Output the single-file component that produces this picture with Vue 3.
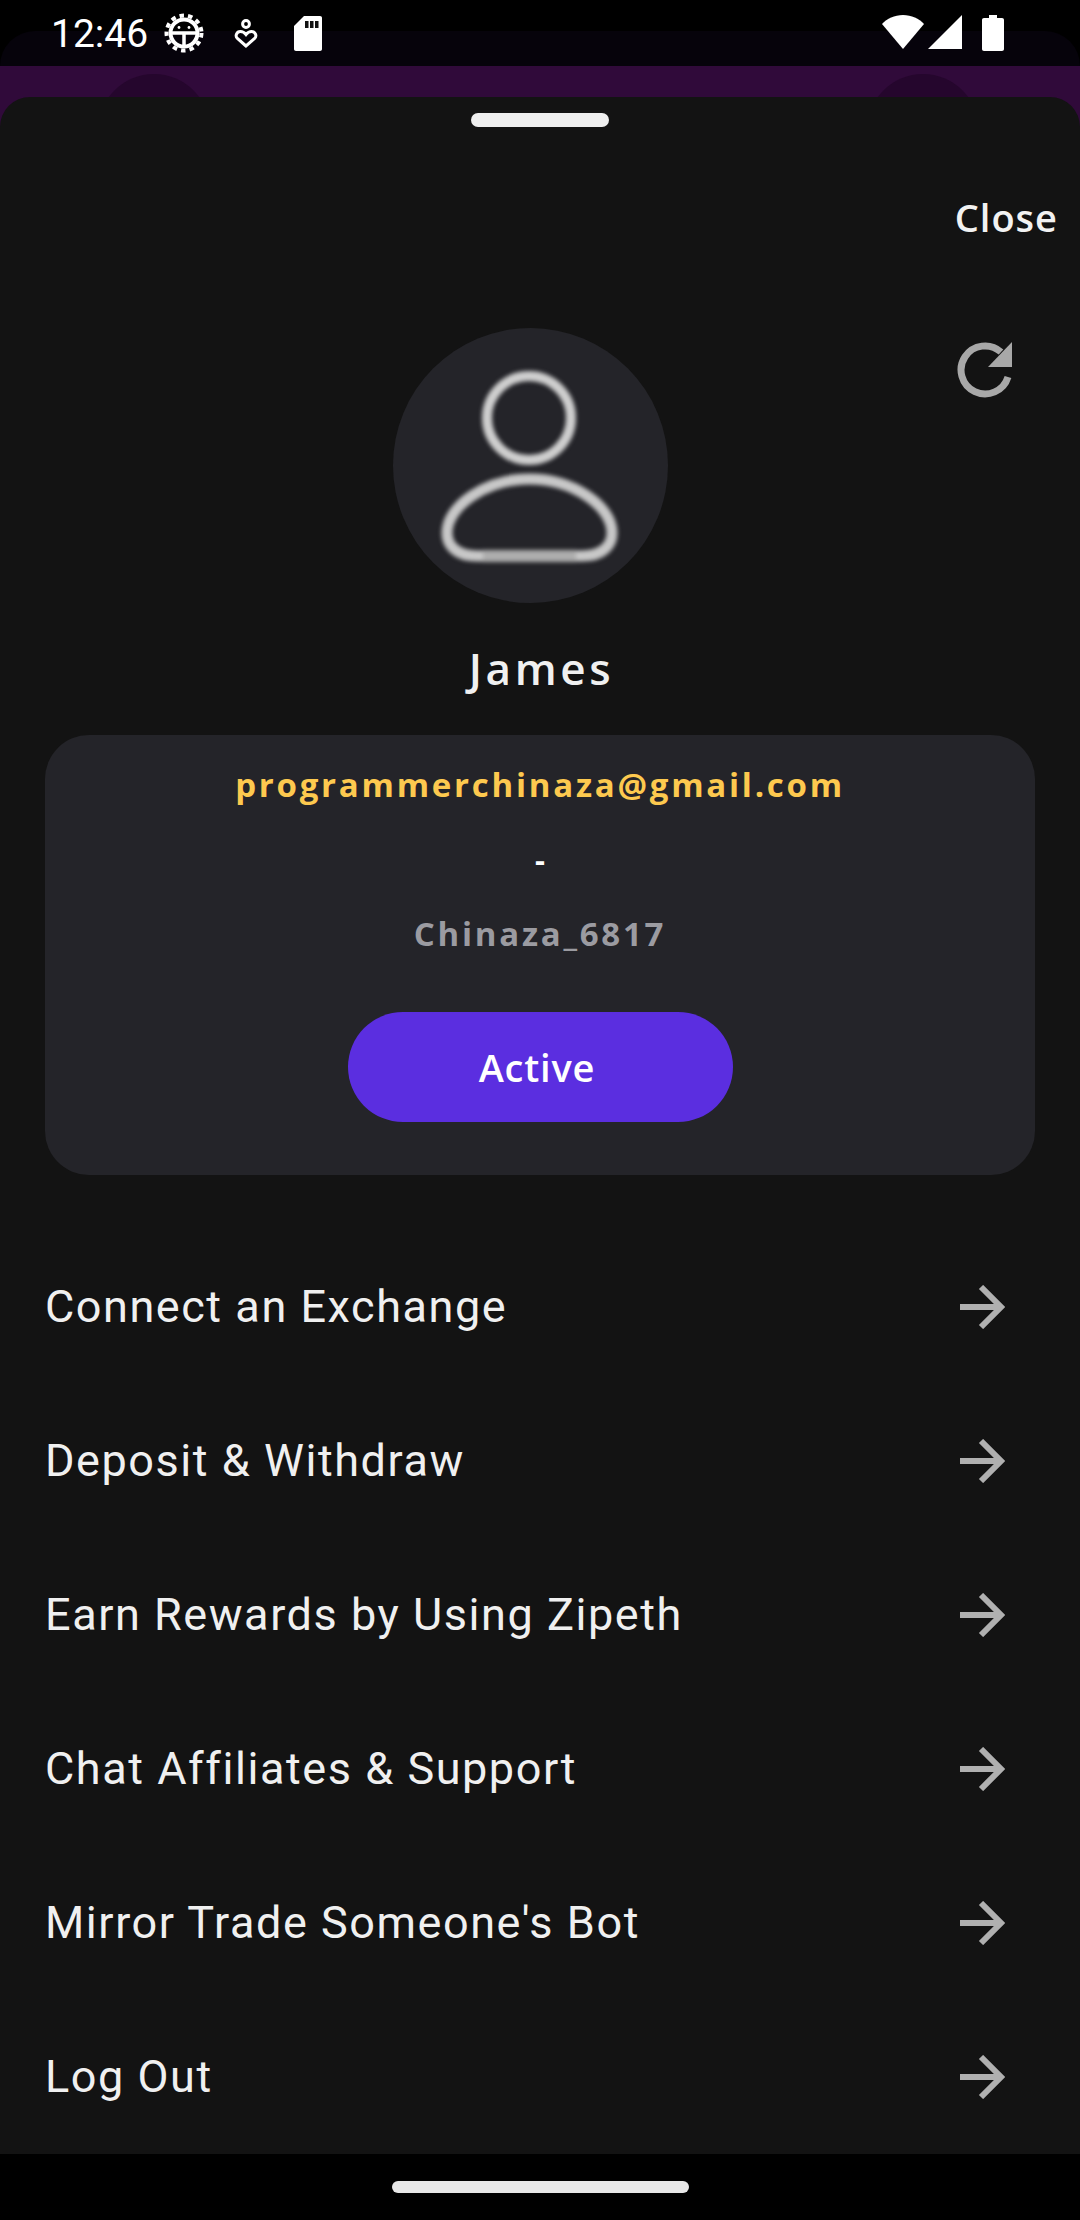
<script setup>
const menuItems = [
  "Connect an Exchange",
  "Deposit & Withdraw",
  "Earn Rewards by Using Zipeth",
  "Chat Affiliates & Support",
  "Mirror Trade Someone's Bot",
  "Log Out",
];
</script>

<template>
  <div class="page">
    <div class="status-bar">
      <div class="status-left">
        <span class="time">12:46</span>
        <svg class="icon-bug" width="40" height="40" viewBox="0 0 40 40" fill="none" stroke="#fff">
          <circle cx="20" cy="20" r="17.5" stroke-width="4" stroke-dasharray="4.5 4.1" />
          <circle cx="20" cy="20" r="13.5" stroke-width="4" />
          <path d="M7 20H33M20 20V33" stroke-width="3.5" />
          <circle cx="15" cy="14.5" r="1.4" fill="#fff" stroke="none" />
          <circle cx="25" cy="14.5" r="1.4" fill="#fff" stroke="none" />
        </svg>
        <svg class="icon-heart" width="24" height="30" viewBox="0 0 24 30" fill="none" stroke="#fff" stroke-width="3">
          <circle cx="12" cy="5" r="3.4" />
          <path d="M12 27L3.4 19.5C.8 17 2.6 12.6 6.4 12.6C8.8 12.6 10.6 13.8 12 15.6C13.4 13.8 15.2 12.6 17.6 12.6C21.4 12.6 23.2 17 20.6 19.5Z" />
        </svg>
        <svg class="icon-sd" width="28" height="35" viewBox="0 0 28 35">
          <path fill="#fff" d="M10 0H26C27.2 0 28 .8 28 2V33C28 34.2 27.2 35 26 35H2C.8 35 0 34.2 0 33V10Z" />
          <path fill="#111" d="M11 5H14.5V12H11ZM16 5H19.5V12H16ZM21 5H24.5V12H21Z" />
        </svg>
      </div>
      <div class="status-right">
        <svg width="42" height="34" viewBox="0 0 42 34"><path fill="#fff" d="M21 34L0 9C5 3.5 12.5 0 21 0S37 3.5 42 9Z" /></svg>
        <svg width="34" height="34" viewBox="0 0 34 34"><path fill="#fff" d="M0 34L34 0V34Z" /></svg>
        <svg class="icon-battery" width="22" height="36" viewBox="0 0 22 36">
          <path fill="#fff" d="M7 0H15V3H20C21.2 3 22 3.8 22 5V34C22 35.2 21.2 36 20 36H2C.8 36 0 35.2 0 34V5C0 3.8 .8 3 2 3H7Z" />
        </svg>
      </div>
    </div>

    <div class="sheet-wrap">
      <div class="app-bar">
        <span class="bar-circle bar-circle-left"></span>
        <span class="bar-circle bar-circle-right"></span>
      </div>
      <div class="sheet">
        <div class="handle"></div>
        <div class="close-row"><span class="close">Close</span></div>

        <div class="profile-top">
          <div class="avatar">
            <svg class="avatar-icon" width="275" height="275" viewBox="0 0 275 275" fill="none">
              <circle cx="136" cy="90" r="42" stroke="#cfcfcf" stroke-width="10" />
              <path
                d="M84 228H189C210 228 219 217 219 205C219 178 180 151 136.5 151C93 151 54 178 54 205C54 217 63 228 84 228Z"
                stroke="#c8c8c8"
                stroke-width="11"
              />
              <path d="M90 228H183" stroke="#adadad" stroke-width="12" />
            </svg>
          </div>
          <svg class="refresh" width="56" height="56" viewBox="0 0 56 56" fill="none">
            <path d="M44 10A24 24 0 1 0 51 35" stroke="#a8a8a8" stroke-width="7" />
            <path d="M55 0V25H31Z" fill="#a8a8a8" />
          </svg>
        </div>

        <div class="name">James</div>

        <div class="card">
          <div class="email">programmerchinaza@gmail.com</div>
          <div class="dash">-</div>
          <div class="username">Chinaza_6817</div>
          <div class="status-pill"><span>Active</span></div>
        </div>

        <ul class="menu">
          <li v-for="item in menuItems" :key="item" class="menu-item">
            <span>{{ item }}</span>
            <svg width="46" height="44" viewBox="0 0 46 44" fill="none" stroke="#b0b0b0" stroke-width="6">
              <path d="M1 22H42M22 2L42 22L22 42" />
            </svg>
          </li>
        </ul>
      </div>
    </div>

    <div class="nav-bar"><div class="home-indicator"></div></div>
  </div>
</template>

<style scoped>
.page {
  width: 1080px;
  height: 2220px;
  display: flex;
  flex-direction: column;
  overflow: hidden;
  background: #000;
  font-family: "Open Sans", sans-serif;
}

.status-bar {
  position: relative;
  height: 66px;
  flex: none;
  display: flex;
  justify-content: space-between;
  padding: 0 76px 0 51px;
  box-sizing: border-box;
  background: #000;
}

.status-bar::before {
  content: "";
  position: absolute;
  inset: 31px 0 0;
  border-radius: 60px 60px 0 0;
  background: #06030b;
}

.status-left,
.status-right {
  position: relative;
  display: flex;
  align-items: flex-start;
}

.time {
  margin-top: 11px;
  width: 113px;
  font-family: Roboto, sans-serif;
  font-size: 39px;
  line-height: 46px;
  color: #fff;
}

.icon-bug {
  margin-top: 13px;
}

.icon-heart {
  margin: 19px 0 0 30px;
}

.icon-sd {
  margin: 16px 0 0 36px;
}

.status-right {
  gap: 4px;
  padding-top: 15px;
}

.icon-battery {
  margin-left: 16px;
}

.sheet-wrap {
  flex: 1;
  display: flex;
  flex-direction: column;
  background: #300a3a;
}

.app-bar {
  height: 31px;
  flex: none;
  position: relative;
  overflow: hidden;
}

.bar-circle {
  position: absolute;
  top: 8px;
  width: 112px;
  height: 112px;
  border-radius: 50%;
  background: #25062d;
}

.bar-circle-left {
  left: 98px;
}

.bar-circle-right {
  left: 867px;
}

.sheet {
  flex: 1;
  background: #131313;
  border-radius: 30px 30px 0 0;
  color: #fff;
}

.handle {
  width: 138px;
  height: 14px;
  margin: 16px auto 0;
  border-radius: 7px;
  background: #efefef;
}

.close-row {
  display: flex;
  justify-content: flex-end;
  padding: 66px 22px 0 0;
}

.close {
  font-size: 38px;
  line-height: 48px;
  font-weight: 600;
  letter-spacing: 1px;
  color: #f2f2f2;
}

.profile-top {
  display: flex;
  justify-content: space-between;
  align-items: flex-start;
  padding: 87px 67px 0 393px;
}

.avatar {
  width: 275px;
  height: 275px;
  border-radius: 50%;
  background: #242429;
}

.avatar-icon {
  display: block;
  filter: blur(2px);
}

.refresh {
  margin-top: 14px;
}

.name {
  margin-top: 39px;
  padding-left: 3px;
  text-align: center;
  font-size: 44px;
  line-height: 52px;
  font-weight: 600;
  letter-spacing: 3.6px;
  color: #f0f0f0;
}

.card {
  margin: 41px 45px 0;
  height: 440px;
  box-sizing: border-box;
  padding-top: 29px;
  border-radius: 44px;
  background: #242429;
  text-align: center;
}

.email {
  font-size: 33px;
  line-height: 42px;
  font-weight: 700;
  letter-spacing: 2.75px;
  color: #fdc94f;
}

.dash {
  margin-top: 32px;
  font-size: 31px;
  line-height: 42px;
  font-weight: 700;
}

.username {
  margin-top: 33px;
  font-size: 33px;
  line-height: 42px;
  font-weight: 700;
  letter-spacing: 2.75px;
  color: #9b9ba1;
}

.status-pill {
  width: 385px;
  height: 110px;
  margin: 57px auto 0;
  display: flex;
  align-items: center;
  justify-content: center;
  border-radius: 55px;
  background: #5b2ee0;
  font-size: 38px;
  font-weight: 600;
  letter-spacing: 0.8px;
}

.status-pill span {
  margin-right: 6px;
}

.menu {
  list-style: none;
  margin: 54px 0 0;
  padding: 0 69px 0 45px;
}

.menu-item {
  height: 154px;
  display: flex;
  align-items: center;
  justify-content: space-between;
  font-family: Roboto, sans-serif;
  font-size: 45px;
  letter-spacing: 1.55px;
  color: #f0f0f0;
}

.menu-item svg {
  margin: 2px 6px 0 0;
}

.nav-bar {
  height: 66px;
  flex: none;
  padding-top: 27px;
  box-sizing: border-box;
}

.home-indicator {
  width: 297px;
  height: 12px;
  margin: 0 auto;
  border-radius: 6px;
  background: #e8e8e8;
}
</style>
